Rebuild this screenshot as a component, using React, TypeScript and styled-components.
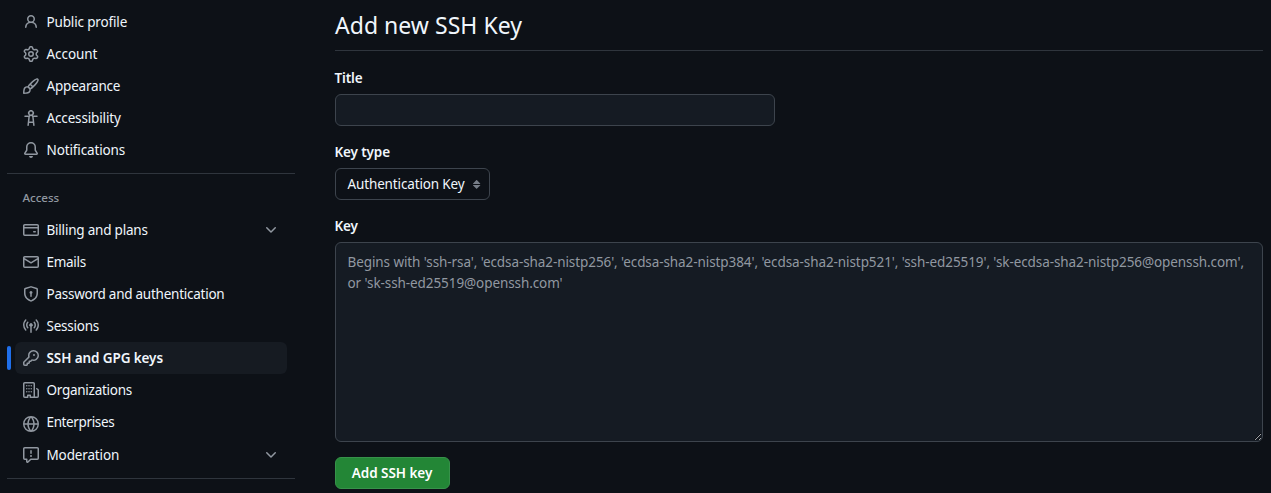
import React from "react";
import styled, { createGlobalStyle } from "styled-components";

const Global = createGlobalStyle`
  * { box-sizing: border-box; }
  html, body { margin: 0; background: #0d1117; }
  body {
    color: #f0f6fc;
    font-family: "Noto Sans", "Open Sans", sans-serif;
    font-size: 13.5px;
    line-height: 20px;
    overflow: hidden;
  }
`;

const Page = styled.div`
  display: grid;
  grid-template-columns: 288px 928px;
  column-gap: 40px;
  height: 493px;
  padding: 0 8px 0 7px;
  overflow: hidden;
`;

const Sidebar = styled.nav`
  display: flex;
  flex-direction: column;
  padding-top: 6px;
`;

const NavList = styled.ul`
  list-style: none;
  margin: 0;
  padding: 0 8px;
`;

const NavItem = styled.li<{ $active?: boolean; $tall?: boolean }>`
  position: relative;
  display: flex;
  align-items: center;
  gap: 7.5px;
  height: ${(p) => (p.$tall ? 33 : 32)}px;
  padding: 0 8px;
  border-radius: 6px;
  background: ${(p) => (p.$active ? "#161b22" : "transparent")};
  font-weight: ${(p) => (p.$active ? 600 : 400)};
  &::before {
    content: "";
    display: ${(p) => (p.$active ? "block" : "none")};
    position: absolute;
    left: -8px;
    top: 4px;
    width: 4px;
    height: 24px;
    border-radius: 2px;
    background: #1f6feb;
  }
`;

const Icon = styled.svg`
  display: block;
  flex: none;
  width: 16px;
  height: 16px;
  fill: #9198a1;
`;

const NavIcon = styled(Icon)<{ $low?: boolean }>`
  margin-top: ${(p) => (p.$low ? "3px" : "0")};
`;

const SelectIcon = styled(Icon)`
  fill: #767d87;
`;

const Label = styled.span<{ $track: number; $tall?: boolean }>`
  flex: 1;
  white-space: nowrap;
  letter-spacing: ${(p) => p.$track}px;
  margin-top: ${(p) => (p.$tall ? "-1px" : "0")};
`;

const Divider = styled.hr`
  width: 288px;
  height: 1px;
  border: 0;
  margin: 7px 0;
  background: #2f353d;
`;

const GroupTitle = styled.h2`
  margin: 7px 0 6px;
  padding: 0 15.5px;
  color: #9198a1;
  font-size: 11.6px;
  font-weight: 500;
  line-height: 20px;
  letter-spacing: -0.05px;
`;

const Main = styled.main`
  display: flex;
  flex-direction: column;
  align-items: flex-start;
`;

const Heading = styled.h1`
  width: 100%;
  height: 51px;
  margin: 0 0 17px;
  padding-top: 7px;
  border-bottom: 1px solid #2f353d;
  font-size: 23px;
  font-weight: 400;
  line-height: 36px;
  letter-spacing: 0.03px;
`;

const FieldLabel = styled.label`
  height: 20px;
  margin: 0 0 6px -0.5px;
  font-weight: 600;
  letter-spacing: -0.13px;
`;

const TextInput = styled.input`
  width: 440px;
  height: 32px;
  margin: 0 0 16px;
  padding: 0 12px;
  border: 1px solid #3d444d;
  border-radius: 6px;
  background: #151b23;
  color: inherit;
  font: inherit;
`;

const Select = styled.button`
  display: flex;
  align-items: center;
  width: 155px;
  height: 32px;
  margin: 0 0 16px;
  padding: 0 4px 0 11.5px;
  border: 1px solid #3d444d;
  border-radius: 6px;
  background: #0d1117;
  color: inherit;
  font: inherit;
`;

const SelectText = styled(Label)`
  text-align: left;
`;

const KeyInput = styled.textarea`
  display: block;
  width: 100%;
  height: 200px;
  margin: 0 0 15px;
  padding: 9px 11.5px;
  border: 1px solid #3d444d;
  border-radius: 6px;
  background: #151b23;
  color: inherit;
  color-scheme: dark;
  font: inherit;
  line-height: 21px;
  letter-spacing: -0.085px;
  overflow: hidden;
  resize: vertical;
  &::placeholder { color: #9198a1; opacity: 1; }
`;

const Submit = styled.button`
  width: 115px;
  height: 32px;
  padding: 0 1px 0 0;
  border: 1px solid #37924a;
  border-radius: 6px;
  background: #238636;
  color: #ffffff;
  font: inherit;
  font-weight: 600;
  letter-spacing: -0.05px;
`;

const icons = {
  person:
    "M10.561 8.073a6.005 6.005 0 0 1 3.432 5.142.75.75 0 1 1-1.498.07 4.5 4.5 0 0 0-8.99 0 .75.75 0 0 1-1.498-.07 6.004 6.004 0 0 1 3.431-5.142 3.999 3.999 0 1 1 5.123 0ZM10.5 5a2.5 2.5 0 1 0-5 0 2.5 2.5 0 0 0 5 0Z",
  gear:
    "M8 0a8.2 8.2 0 0 1 .701.031C9.444.095 9.99.645 10.16 1.29l.288 1.107c.018.066.079.158.212.224.231.114.454.243.668.386.123.082.233.09.299.071l1.103-.303c.644-.176 1.392.021 1.82.63.27.385.506.792.704 1.218.315.675.111 1.422-.364 1.891l-.814.806c-.049.048-.098.147-.088.294.016.257.016.515 0 .772-.01.147.038.246.088.294l.814.806c.475.469.679 1.216.364 1.891a7.977 7.977 0 0 1-.704 1.217c-.428.61-1.176.807-1.82.63l-1.102-.302c-.067-.019-.177-.011-.3.071a5.909 5.909 0 0 1-.668.386c-.133.066-.194.158-.211.224l-.29 1.106c-.168.646-.715 1.196-1.458 1.26a8.006 8.006 0 0 1-1.402 0c-.743-.064-1.289-.614-1.458-1.26l-.289-1.106c-.018-.066-.079-.158-.212-.224a5.738 5.738 0 0 1-.668-.386c-.123-.082-.233-.09-.299-.071l-1.103.303c-.644.176-1.392-.021-1.82-.63a8.12 8.12 0 0 1-.704-1.218c-.315-.675-.111-1.422.363-1.891l.815-.806c.05-.048.098-.147.088-.294a6.214 6.214 0 0 1 0-.772c.01-.147-.038-.246-.088-.294l-.815-.806C.635 6.045.431 5.298.746 4.623a7.92 7.92 0 0 1 .704-1.217c.428-.61 1.176-.807 1.82-.63l1.102.302c.067.019.177.011.3-.071.214-.143.437-.272.668-.386.133-.066.194-.158.211-.224l.29-1.106C6.009.645 6.556.095 7.299.03 7.53.01 7.764 0 8 0Zm-.571 1.525c-.036.003-.108.036-.137.146l-.289 1.105c-.147.561-.549.967-.998 1.189-.173.086-.34.183-.5.29-.417.278-.97.423-1.529.27l-1.103-.303c-.109-.03-.175.016-.195.045-.22.312-.412.644-.573.99-.014.031-.021.11.059.19l.815.806c.411.406.562.957.53 1.456a4.709 4.709 0 0 0 0 .582c.032.499-.119 1.05-.53 1.456l-.815.806c-.081.08-.073.159-.059.19.162.346.353.677.573.989.02.03.085.076.195.046l1.102-.303c.56-.153 1.113-.008 1.53.27.161.107.328.204.501.29.447.222.85.629.997 1.189l.289 1.105c.029.109.101.143.137.146a6.6 6.6 0 0 0 1.142 0c.036-.003.108-.036.137-.146l.289-1.105c.147-.561.549-.967.998-1.189.173-.086.34-.183.5-.29.417-.278.97-.423 1.529-.27l1.103.303c.109.029.175-.016.195-.045.22-.313.411-.644.573-.99.014-.031.021-.11-.059-.19l-.815-.806c-.411-.406-.562-.957-.53-1.456a4.709 4.709 0 0 0 0-.582c-.032-.499.119-1.05.53-1.456l.815-.806c.081-.08.073-.159.059-.19a6.464 6.464 0 0 0-.573-.989c-.02-.03-.085-.076-.195-.046l-1.102.303c-.56.153-1.113.008-1.53-.27a4.44 4.44 0 0 0-.501-.29c-.447-.222-.85-.629-.997-1.189l-.289-1.105c-.029-.11-.101-.143-.137-.146a6.6 6.6 0 0 0-1.142 0ZM11 8a3 3 0 1 1-6 0 3 3 0 0 1 6 0ZM9.5 8a1.5 1.5 0 1 0-3.001.001A1.5 1.5 0 0 0 9.5 8Z",
  brush:
    "M11.134 1.535c.7-.509 1.416-.942 2.076-1.155.649-.21 1.463-.267 2.069.34.603.601.568 1.411.368 2.07-.202.668-.624 1.39-1.125 2.096-1.011 1.424-2.496 2.987-3.775 4.249-1.098 1.084-2.132 1.839-3.04 2.3a3.744 3.744 0 0 1-1.055 3.217c-.431.431-1.065.691-1.657.861-.614.177-1.294.287-1.914.357A21.151 21.151 0 0 1 .797 16H.743l.007-.75H.749L.742 16a.75.75 0 0 1-.743-.742l.743-.008-.742.007v-.054a21.25 21.25 0 0 1 .13-2.284c.067-.647.187-1.287.358-1.914.17-.591.43-1.226.86-1.657a3.746 3.746 0 0 1 3.227-1.054c.466-.893 1.225-1.907 2.314-2.982 1.271-1.255 2.833-2.75 4.245-3.777ZM1.62 13.089c-.051.464-.086.929-.104 1.395.466-.018.932-.053 1.396-.104a10.511 10.511 0 0 0 1.668-.309c.526-.151.856-.325 1.011-.48a2.25 2.25 0 1 0-3.182-3.182c-.155.155-.329.485-.48 1.01a10.515 10.515 0 0 0-.309 1.67Zm10.396-10.34c-1.224.89-2.605 2.189-3.822 3.384l1.718 1.718c1.21-1.205 2.51-2.597 3.387-3.833.47-.662.78-1.227.912-1.662.134-.444.032-.551.009-.575h-.001V1.78c-.014-.014-.113-.113-.548.027-.432.14-.995.462-1.655.942Zm-4.832 7.266-.001.001a9.859 9.859 0 0 0 1.63-1.142L7.155 7.216a9.7 9.7 0 0 0-1.161 1.607c.482.302.889.71 1.19 1.192Z",
  accessibility:
    "M9.923 5.302c.063.063.122.129.178.198H14A.75.75 0 0 1 14 7h-3.3l.578 5.163.362 2.997a.75.75 0 0 1-1.49.18L9.868 13H6.132l-.282 2.34a.75.75 0 0 1-1.49-.18l.362-2.997L5.3 7H2a.75.75 0 0 1 0-1.5h3.9a2.54 2.54 0 0 1 .176-.198 3 3 0 1 1 3.847 0ZM9.2 7.073h-.001a1.206 1.206 0 0 0-2.398 0L6.305 11.5h3.39ZM9.5 3a1.5 1.5 0 1 0-3.001.001A1.5 1.5 0 0 0 9.5 3Z",
  bell:
    "M8 16a2 2 0 0 0 1.985-1.75c.017-.137-.097-.25-.235-.25h-3.5c-.138 0-.252.113-.235.25A2 2 0 0 0 8 16ZM3 5a5 5 0 0 1 10 0v2.947c0 .05.015.098.042.139l1.703 2.555A1.519 1.519 0 0 1 13.482 13H2.518a1.516 1.516 0 0 1-1.263-2.36l1.703-2.554A.255.255 0 0 0 3 7.947Zm5-3.5A3.5 3.5 0 0 0 4.5 5v2.947c0 .346-.102.683-.294.97l-1.703 2.556a.017.017 0 0 0-.003.01l.001.006c0 .002.002.004.004.006l.006.004.007.001h10.964l.007-.001.006-.004.004-.006.001-.007a.017.017 0 0 0-.003-.01l-1.703-2.554a1.745 1.745 0 0 1-.294-.97V5A3.5 3.5 0 0 0 8 1.5Z",
  card:
    "M10.75 9a.75.75 0 0 0 0 1.5h1.5a.75.75 0 0 0 0-1.5h-1.5ZM0 3.75C0 2.784.784 2 1.75 2h12.5c.966 0 1.75.784 1.75 1.75v8.5A1.75 1.75 0 0 1 14.25 14H1.75A1.75 1.75 0 0 1 0 12.25ZM14.5 6.5h-13v5.75c0 .138.112.25.25.25h12.5a.25.25 0 0 0 .25-.25Zm0-2.75a.25.25 0 0 0-.25-.25H1.75a.25.25 0 0 0-.25.25V5h13Z",
  mail:
    "M1.75 2h12.5c.966 0 1.75.784 1.75 1.75v8.5A1.75 1.75 0 0 1 14.25 14H1.75A1.75 1.75 0 0 1 0 12.25v-8.5C0 2.784.784 2 1.75 2ZM1.5 12.251c0 .138.112.25.25.25h12.5a.25.25 0 0 0 .25-.25V5.809L8.38 9.397a.75.75 0 0 1-.76 0L1.5 5.809v6.442Zm13-8.181v-.32a.25.25 0 0 0-.25-.25H1.75a.25.25 0 0 0-.25.25v.32L8 7.88Z",
  shield:
    "m8.533.133 5.25 1.68A1.75 1.75 0 0 1 15 3.48V7c0 1.566-.32 3.182-1.303 4.682-.983 1.498-2.585 2.813-5.032 3.855a1.697 1.697 0 0 1-1.33 0c-2.447-1.042-4.049-2.357-5.032-3.855C1.32 10.182 1 8.566 1 7V3.48a1.755 1.755 0 0 1 1.217-1.667l5.25-1.68a1.748 1.748 0 0 1 1.066 0Zm-.61 1.429.001.001-5.25 1.68a.251.251 0 0 0-.174.237V7c0 1.36.275 2.666 1.057 3.859.784 1.194 2.121 2.342 4.366 3.298a.196.196 0 0 0 .154 0c2.245-.957 3.582-2.103 4.366-3.297C13.225 9.666 13.5 8.358 13.5 7V3.48a.25.25 0 0 0-.174-.238l-5.25-1.68a.25.25 0 0 0-.153 0ZM9.5 6.5c0 .536-.286 1.032-.75 1.3v2.45a.75.75 0 0 1-1.5 0V7.8A1.5 1.5 0 1 1 9.5 6.5Z",
  broadcast:
    "M8.75 8.582v5.668a.75.75 0 0 1-1.5 0V8.582a1.75 1.75 0 1 1 1.5 0Zm3.983-7.125a.75.75 0 0 1 1.06.026A7.976 7.976 0 0 1 16 7c0 2.139-.84 4.083-2.207 5.517a.75.75 0 1 1-1.086-1.034A6.474 6.474 0 0 0 14.5 7a6.474 6.474 0 0 0-1.793-4.483.75.75 0 0 1 .026-1.06Zm-9.466 0c.3.286.312.76.026 1.06A6.474 6.474 0 0 0 1.5 7a6.47 6.47 0 0 0 1.793 4.483.75.75 0 0 1-1.086 1.034A7.973 7.973 0 0 1 0 7c0-2.139.84-4.083 2.207-5.517a.75.75 0 0 1 1.06-.026Zm8.556 2.321A4.988 4.988 0 0 1 13 7a4.988 4.988 0 0 1-1.177 3.222.75.75 0 1 1-1.146-.967A3.487 3.487 0 0 0 11.5 7c0-.86-.309-1.645-.823-2.255a.75.75 0 0 1 1.146-.967Zm-6.492.958A3.48 3.48 0 0 0 4.5 7a3.48 3.48 0 0 0 .823 2.255.75.75 0 0 1-1.146.967A4.981 4.981 0 0 1 3 7a4.982 4.982 0 0 1 1.188-3.236.75.75 0 1 1 1.143.972Z",
  key:
    "M10.5 0a5.499 5.499 0 1 1-1.288 10.848l-.932.932a.749.749 0 0 1-.53.22H7v.75a.749.749 0 0 1-.22.53l-.5.5a.749.749 0 0 1-.53.22H5v.75a.749.749 0 0 1-.22.53l-.5.5a.749.749 0 0 1-.53.22h-2A1.75 1.75 0 0 1 0 14.25v-2c0-.199.079-.389.22-.53l4.932-4.932A5.5 5.5 0 0 1 10.5 0Zm-4 5.5c-.001.431.069.86.205 1.269a.75.75 0 0 1-.181.768L1.5 12.56v1.69c0 .138.112.25.25.25h1.69l.06-.06v-1.19a.75.75 0 0 1 .75-.75h1.19l.06-.06v-1.19a.75.75 0 0 1 .75-.75h1.19l1.023-1.025a.75.75 0 0 1 .768-.18A4 4 0 1 0 6.5 5.5ZM11 6a1 1 0 1 1 0-2 1 1 0 0 1 0 2Z",
  organization:
    "M1.75 16A1.75 1.75 0 0 1 0 14.25V1.75C0 .784.784 0 1.75 0h8.5C11.216 0 12 .784 12 1.75v12.5c0 .085-.006.168-.018.25h2.268a.25.25 0 0 0 .25-.25V8.285a.25.25 0 0 0-.111-.208l-1.055-.703a.749.749 0 1 1 .832-1.248l1.055.703c.487.325.779.871.779 1.456v5.965A1.75 1.75 0 0 1 14.25 16h-3.5a.766.766 0 0 1-.197-.026c-.099.017-.2.026-.303.026h-3a.75.75 0 0 1-.75-.75V14h-1v1.25a.75.75 0 0 1-.75.75Zm-.25-1.75c0 .138.112.25.25.25H4v-1.25a.75.75 0 0 1 .75-.75h2.5a.75.75 0 0 1 .75.75v1.25h2.25a.25.25 0 0 0 .25-.25V1.75a.25.25 0 0 0-.25-.25h-8.5a.25.25 0 0 0-.25.25ZM3 3.75a.75.75 0 1 1 1.5 0 .75.75 0 0 1-1.5 0ZM5.25 3.75a.75.75 0 1 1 1.5 0 .75.75 0 0 1-1.5 0ZM7.5 3.75a.75.75 0 1 1 1.5 0 .75.75 0 0 1-1.5 0ZM3 6.75a.75.75 0 1 1 1.5 0 .75.75 0 0 1-1.5 0ZM5.25 6.75a.75.75 0 1 1 1.5 0 .75.75 0 0 1-1.5 0ZM7.5 6.75a.75.75 0 1 1 1.5 0 .75.75 0 0 1-1.5 0ZM3 9.75a.75.75 0 1 1 1.5 0 .75.75 0 0 1-1.5 0ZM5.25 9.75a.75.75 0 1 1 1.5 0 .75.75 0 0 1-1.5 0ZM7.5 9.75a.75.75 0 1 1 1.5 0 .75.75 0 0 1-1.5 0Z",
  globe:
    "M8 0a8 8 0 1 1 0 16A8 8 0 0 1 8 0ZM5.78 8.75a9.64 9.64 0 0 0 1.363 4.177c.255.426.542.832.857 1.215.245-.296.551-.705.857-1.215A9.64 9.64 0 0 0 10.22 8.75Zm4.44-1.5a9.64 9.64 0 0 0-1.363-4.177c-.307-.51-.612-.919-.857-1.215a9.927 9.927 0 0 0-.857 1.215A9.64 9.64 0 0 0 5.78 7.25Zm-5.944 1.5H1.543a6.507 6.507 0 0 0 4.666 5.5c-.123-.181-.24-.365-.352-.552-.715-1.192-1.437-2.874-1.581-4.948Zm-2.733-1.5h2.733c.144-2.074.866-3.756 1.58-4.948.12-.197.237-.381.353-.552a6.507 6.507 0 0 0-4.666 5.5Zm10.181 1.5c-.144 2.074-.866 3.756-1.58 4.948-.12.197-.237.381-.353.552a6.507 6.507 0 0 0 4.666-5.5Zm2.733-1.5a6.507 6.507 0 0 0-4.666-5.5c.123.181.24.365.353.552.714 1.192 1.436 2.874 1.58 4.948Z",
  report:
    "M0 1.75C0 .784.784 0 1.75 0h12.5C15.216 0 16 .784 16 1.75v9.5A1.75 1.75 0 0 1 14.25 13H8.06l-2.573 2.573A1.458 1.458 0 0 1 3 14.543V13H1.75A1.75 1.75 0 0 1 0 11.25Zm1.75-.25a.25.25 0 0 0-.25.25v9.5c0 .138.112.25.25.25h2a.75.75 0 0 1 .75.75v2.19l2.72-2.72a.749.749 0 0 1 .53-.22h6.5a.25.25 0 0 0 .25-.25v-9.5a.25.25 0 0 0-.25-.25Zm7 2.25v2.5a.75.75 0 0 1-1.5 0v-2.5a.75.75 0 0 1 1.5 0ZM9 9a1 1 0 1 1-2 0 1 1 0 0 1 2 0Z",
  chevron:
    "M12.78 5.22a.749.749 0 0 1 0 1.06l-4.25 4.25a.749.749 0 0 1-1.06 0L3.22 6.28a.749.749 0 1 1 1.06-1.06L8 8.939l3.72-3.719a.749.749 0 0 1 1.06 0Z",
  updown:
    "m4.074 9.427 3.396 3.396a.25.25 0 0 0 .354 0l3.396-3.396A.25.25 0 0 0 11.043 9H4.251a.25.25 0 0 0-.177.427ZM4.074 7.47 7.47 4.073a.25.25 0 0 1 .354 0L11.22 7.47a.25.25 0 0 1-.177.426H4.251a.25.25 0 0 1-.177-.426Z",
};

type Item = {
  icon: keyof typeof icons;
  text: string;
  track: number;
  active?: boolean;
  tall?: boolean;
  expandable?: boolean;
};

const profileItems: Item[] = [
  { icon: "person", text: "Public profile", track: -0.15 },
  { icon: "gear", text: "Account", track: -0.07 },
  { icon: "brush", text: "Appearance", track: -0.2 },
  { icon: "accessibility", text: "Accessibility", track: -0.15 },
  { icon: "bell", text: "Notifications", track: -0.13 },
];

const accessItems: Item[] = [
  { icon: "card", text: "Billing and plans", track: -0.21, expandable: true },
  { icon: "mail", text: "Emails", track: -0.3 },
  { icon: "shield", text: "Password and authentication", track: -0.25 },
  { icon: "broadcast", text: "Sessions", track: -0.24 },
  { icon: "key", text: "SSH and GPG keys", track: -0.1, active: true },
  { icon: "organization", text: "Organizations", track: -0.27 },
  { icon: "globe", text: "Enterprises", track: -0.37, tall: true },
  { icon: "report", text: "Moderation", track: -0.14, expandable: true },
];

function NavGroup({ items }: { items: Item[] }) {
  return (
    <NavList>
      {items.map((it) => (
        <NavItem key={it.text} $active={it.active} $tall={it.tall}>
          <NavIcon viewBox="0 0 16 16" $low={it.tall}>
            <path d={icons[it.icon]} />
          </NavIcon>
          <Label $track={it.track} $tall={it.tall}>
            {it.text}
          </Label>
          {it.expandable && (
            <Icon viewBox="0 0 16 16">
              <path d={icons.chevron} />
            </Icon>
          )}
        </NavItem>
      ))}
    </NavList>
  );
}

export default function App() {
  return (
    <>
      <Global />
      <Page>
        <Sidebar>
          <NavGroup items={profileItems} />
          <Divider />
          <GroupTitle>Access</GroupTitle>
          <NavGroup items={accessItems} />
          <Divider />
        </Sidebar>
        <Main>
          <Heading>Add new SSH Key</Heading>
          <FieldLabel htmlFor="title">Title</FieldLabel>
          <TextInput id="title" />
          <FieldLabel>Key type</FieldLabel>
          <Select type="button">
            <SelectText $track={-0.14}>Authentication Key</SelectText>
            <SelectIcon viewBox="0 0 16 16">
              <path d={icons.updown} />
            </SelectIcon>
          </Select>
          <FieldLabel htmlFor="key">Key</FieldLabel>
          <KeyInput
            id="key"
            placeholder="Begins with 'ssh-rsa', 'ecdsa-sha2-nistp256', 'ecdsa-sha2-nistp384', 'ecdsa-sha2-nistp521', 'ssh-ed25519', 'sk-ecdsa-sha2-nistp256@openssh.com', or 'sk-ssh-ed25519@openssh.com'"
          />
          <Submit type="button">Add SSH key</Submit>
        </Main>
      </Page>
    </>
  );
}
